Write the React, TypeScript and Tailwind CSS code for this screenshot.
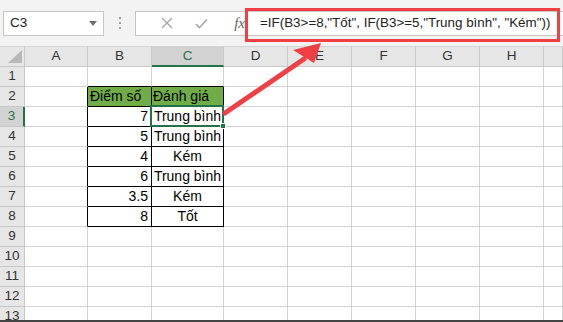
import React from 'react';

const cols = [
  { l: 'A', w: 'w-[63px]' },
  { l: 'B', w: 'w-[64px]' },
  { l: 'C', w: 'w-[72px]' },
  { l: 'D', w: 'w-[64px]' },
  { l: 'E', w: 'w-[64px]' },
  { l: 'F', w: 'w-[64px]' },
  { l: 'G', w: 'w-[64px]' },
  { l: 'H', w: 'w-[64px]' },
  { l: '', w: 'flex-1' },
];

const bVals: Record<number, string> = { 2: 'Điểm số', 3: '7', 4: '5', 5: '4', 6: '6', 7: '3.5', 8: '8' };
const cVals: Record<number, string> = { 2: 'Đánh giá', 3: 'Trung bình', 4: 'Trung bình', 5: 'Kém', 6: 'Trung bình', 7: 'Kém', 8: 'Tốt' };

const font = { fontFamily: '"Liberation Sans", Arial, sans-serif' };

function Cell({ r, c }: { r: number; c: number }) {
  const inTable = r >= 2 && r <= 8;
  const isBC = c === 1 || c === 2;
  const rightBlack = inTable && (c === 0 || isBC);
  const bottomBlack = isBC && r >= 1 && r <= 8;
  const green = isBC && r === 2;
  let text = '';
  let align = 'justify-center';
  if (c === 1 && bVals[r]) {
    text = bVals[r];
    align = r === 2 ? 'justify-start pl-[2px]' : 'justify-end pr-[3px]';
  }
  if (c === 2 && cVals[r]) {
    text = cVals[r];
    align = r === 2 ? 'justify-start pl-[1px]' : 'justify-center';
  }
  const selected = c === 2 && r === 3;
  return (
    <div
      className={`${cols[c].w} h-full shrink-0 border-r border-b flex items-center whitespace-nowrap text-[14px] text-black ${align} ${
        selected ? 'relative z-10' : ''
      } ${rightBlack ? 'border-r-black' : 'border-r-[#d4d4d4]'} ${bottomBlack ? 'border-b-black' : 'border-b-[#d4d4d4]'} ${
        green ? 'bg-[#70ad47]' : 'bg-white'
      }`}
    >
      {text}
      {selected && (
        <>
          <div className="absolute left-[-2px] top-[-2px] right-[-1px] bottom-[-1px] border-2 border-[#217346]" />
          <div className="absolute right-[-3px] bottom-[-3px] w-[6px] h-[6px] bg-[#217346] border border-white" />
        </>
      )}
    </div>
  );
}

export default function App() {
  const rows = Array.from({ length: 13 }, (_, i) => i + 1);
  return (
    <div className="w-[563px] h-[322px] overflow-hidden relative bg-white flex flex-col" style={font}>
      {/* Toolbar */}
      <div className="h-[47px] shrink-0 bg-[#f3f3f3] border-b border-[#d4d4d4] flex items-center">
        <div className="ml-[3px] w-[101px] h-[25px] bg-white border border-[#c6c6c6] flex items-center pl-[6px] pr-[6px] text-[13.5px] text-[#222]">
          <span>C3</span>
          <span className="ml-auto w-0 h-0 border-l-[4px] border-r-[4px] border-t-[5px] border-l-transparent border-r-transparent border-t-[#707070]" />
        </div>
        <div className="w-[31px] flex flex-col items-center gap-[3px]">
          <span className="w-[2px] h-[2px] bg-[#a0a0a0]" />
          <span className="w-[2px] h-[2px] bg-[#a0a0a0]" />
          <span className="w-[2px] h-[2px] bg-[#a0a0a0]" />
        </div>
        <div className="flex-1 h-[25px] bg-white border border-[#c6c6c6] border-r-0 flex items-center">
          <div className="w-[37px] flex justify-end">
            <svg width="12" height="12" viewBox="0 0 12 12">
              <path d="M1 1 L11 11 M11 1 L1 11" stroke="#a6a6a6" strokeWidth="1.4" />
            </svg>
          </div>
          <div className="w-[35px] flex justify-end">
            <svg width="13" height="11" viewBox="0 0 13 11">
              <path d="M1 6 L4.5 9.5 L12 1.5" stroke="#a6a6a6" strokeWidth="1.6" fill="none" />
            </svg>
          </div>
          <div className="w-[38px] flex justify-end pr-[1px]">
            <span className="text-[15px] italic text-[#666]" style={{ fontFamily: '"Liberation Serif", serif' }}>
              fx
            </span>
          </div>
          <span className="ml-[14px] text-[13.4px] text-[#222] whitespace-nowrap">
            =IF(B3&gt;=8,"Tốt", IF(B3&gt;=5,"Trung bình", "Kém"))
          </span>
        </div>
      </div>

      {/* Grid */}
      <div className="h-[273px] shrink-0 overflow-hidden flex flex-col">
        {/* Column header */}
        <div className="h-[20px] shrink-0 flex bg-[#e6e6e6]">
          <div className="w-[25px] shrink-0 h-full border-r border-b border-[#c8c8c8] relative">
            <svg className="absolute right-[2px] bottom-[3px]" width="14" height="13" viewBox="0 0 14 13">
              <polygon points="14,0 14,13 0,13" fill="#b8b8b8" />
            </svg>
          </div>
          {cols.map((c, i) => (
            <div
              key={i}
              className={`${c.w} shrink-0 h-full flex items-center justify-center text-[13.5px] border-r border-[#c8c8c8] ${
                c.l === 'C' ? 'bg-[#d2d2d2] text-[#217346] border-b-2 border-b-[#217346]' : 'text-[#333] border-b border-b-[#c8c8c8]'
              }`}
            >
              {c.l}
            </div>
          ))}
        </div>
        {rows.map((r) => (
          <div key={r} className="h-[20px] shrink-0 flex">
            <div
              className={`w-[25px] shrink-0 h-full flex items-center justify-center text-[13.5px] border-b border-b-[#c8c8c8] ${
                r === 3
                  ? 'bg-[#d2d2d2] text-[#217346] border-r-2 border-r-[#217346]'
                  : 'bg-[#e6e6e6] text-[#333] border-r border-r-[#c8c8c8]'
              }`}
            >
              {r}
            </div>
            {cols.map((_, c) => (
              <Cell key={c} r={r} c={c} />
            ))}
          </div>
        ))}
      </div>
      <div className="h-[2px] shrink-0 bg-[#444]" />

      {/* Red highlight box */}
      <div className="absolute left-[245px] top-[8px] w-[315px] h-[34px] border-[3px] border-[#f04046]" />

      {/* Arrow */}
      <svg className="absolute left-0 top-0 pointer-events-none z-20" width="563" height="322" viewBox="0 0 563 322">
        <line x1="225" y1="113" x2="304" y2="59" stroke="#f04046" strokeWidth="5" strokeLinecap="round" />
        <polygon points="321,43 293,50 314,63" fill="#f04046" />
      </svg>
    </div>
  );
}
